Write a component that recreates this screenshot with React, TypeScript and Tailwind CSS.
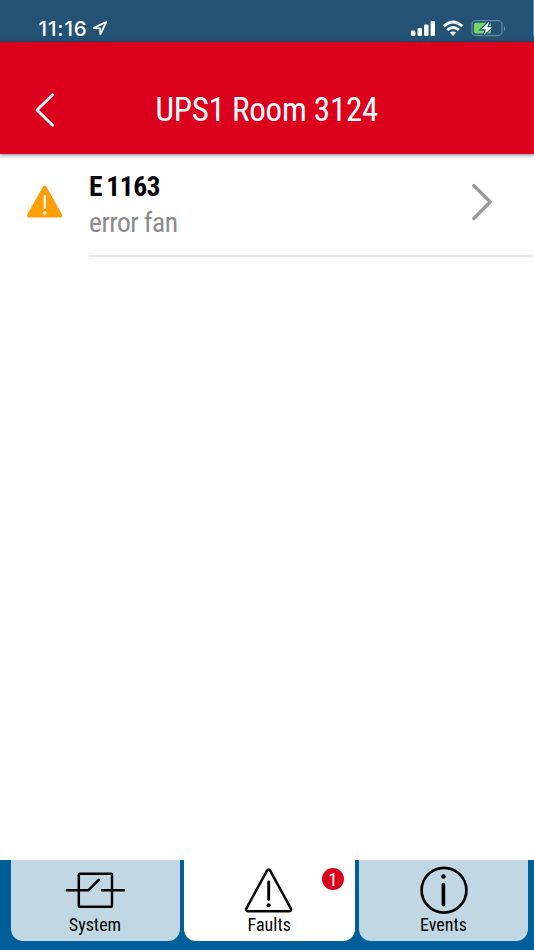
const condensed = "font-['Roboto_Condensed',Roboto,sans-serif] [font-stretch:75%] whitespace-nowrap";

function StatusBar() {
  return (
    <div className="relative flex h-[42px] shrink-0 justify-between bg-[#245275]">
      <div className="ml-[38.5px] flex pt-[16px]">
        <span className="h-6 w-[52px] font-[Inter,sans-serif] text-[20.5px] leading-[26px] font-medium tracking-[0.9px] whitespace-nowrap text-white">11:16</span>
        <svg className="mt-[4px] ml-[1px]" width="17" height="17" viewBox="0 0 17 17" fill="none" stroke="white" strokeWidth="1.8" strokeLinejoin="round">
          <path d="M14.2 2 L1.8 7.9 L8 8.3 L8.4 14.3 Z" />
        </svg>
      </div>
      <svg className="mr-[27px] mt-[18px]" width="96" height="22" viewBox="411 18 96 22">
        <g fill="white">
          <rect x="411" y="30.5" width="4.4" height="5.5" rx="1.2" />
          <rect x="417.6" y="28" width="4.4" height="8" rx="1.2" />
          <rect x="424.1" y="24.5" width="4.4" height="11.5" rx="1.2" />
          <rect x="430.6" y="21" width="4.4" height="15" rx="1.2" />
          <path d="M453 36 L449.8 32.6 Q453 30.2 456.2 32.6 Z" />
        </g>
        <g fill="none" stroke="white" strokeWidth="2.9">
          <path d="M443.7 26.3 Q453 17.6 462.3 26.3" />
          <path d="M447.2 30 Q453 24.8 458.8 30" />
        </g>
        <rect x="472" y="20.7" width="30" height="14.8" rx="4" fill="none" stroke="#6987a0" strokeWidth="1.3" />
        <path d="M504 25.5 q2.2 2.8 0 5.6z" fill="#7d98ad" />
        <rect x="474" y="22.8" width="17" height="10.8" rx="2" fill="#72da68" />
        <path d="M489.3 21.5 L481.3 29.2 h4.8 L483.7 35.2 L492 27.2 h-4.8z" fill="white" stroke="#245275" strokeWidth="2.4" paintOrder="stroke" />
      </svg>
      <div className="absolute top-0 right-0 h-[36px] w-px bg-[#4e9bc5]" />
    </div>
  );
}

function Header() {
  return (
    <header className="relative flex h-[112px] shrink-0 bg-[#db001b] shadow-[0_1px_4px_rgba(0,0,0,0.5)]">
      <svg className="mt-[50px] ml-[34px]" width="22" height="36" viewBox="0 0 22 36" fill="none" stroke="white" strokeWidth="2.8" strokeLinecap="round" strokeLinejoin="round">
        <path d="M18.5 2.8 L3 18 L18.5 33.2" />
      </svg>
      <h1 className={`${condensed} mt-[48px] ml-[99.5px] text-[33px] leading-[40px] tracking-[-0.25px] text-white`}>UPS1 Room 3124</h1>
    </header>
  );
}

function FaultRow() {
  return (
    <div className="flex h-[103px]">
      <svg className="mt-[30px] ml-[26px] shrink-0" width="38" height="36" viewBox="0 0 38 36">
        <path d="M18.7 3.8 L34.3 31.5 H3 Z" fill="#ff9f05" stroke="#ff9f05" strokeWidth="4" strokeLinejoin="round" />
        <path d="M18.8 12 V24" stroke="white" strokeWidth="2.2" strokeLinecap="round" />
        <circle cx="18.8" cy="29" r="1.7" fill="white" />
      </svg>
      <div className="ml-[25px] flex h-[103px] grow justify-between border-b-2 border-[#eaeaea]">
        <div className="flex flex-col pt-[15px]">
          <span className={`${condensed} text-[27.5px] leading-[36px] font-bold tracking-[-0.45px] [word-spacing:-1.7px] text-black`}>E 1163</span>
          <span className={`${condensed} text-[27.5px] leading-[36px] tracking-[-0.5px] text-[#8b8b8b]`}>error fan</span>
        </div>
        <svg className="mt-[29px] mr-[40px]" width="24" height="38" viewBox="0 0 24 38" fill="none" stroke="#999" strokeWidth="3.3" strokeLinecap="round" strokeLinejoin="round">
          <path d="M3.8 2.5 L20.3 19 L3.8 35.5" />
        </svg>
      </div>
    </div>
  );
}

function TabBar() {
  const tab = "relative flex h-[80.5px] flex-col items-center rounded-b-[12px]";
  const label = `${condensed} mt-px text-[18px] leading-[22px] text-black`;
  return (
    <nav className="flex h-[90px] shrink-0 bg-[#005f98] pl-[10.5px]">
      <div className={`${tab} w-[169px] bg-[#c1d8e4]`}>
        <svg className="mt-[8px]" width="62" height="45" viewBox="64 868 62 45" fill="none" stroke="black" strokeWidth="2.5" strokeLinecap="round" strokeLinejoin="round">
          <rect x="78.8" y="873.8" width="33.2" height="33" rx="1" />
          <path d="M66.8 890.3 H88.3 L98.7 879.8 M102 890.3 H123.8" />
        </svg>
        <span className={label}>System</span>
      </div>
      <div className={`${tab} ml-[4.5px] w-[170.5px] bg-white`}>
        <svg className="mt-[8px]" width="50" height="45" viewBox="243.9 868 50 45" fill="none" stroke="black" strokeWidth="2.5" strokeLinecap="round" strokeLinejoin="round">
          <path d="M266.8 870.8 Q268.5 868.2 270.2 870.8 L290.7 908.3 Q291.8 911 289 911.2 H248 Q245.2 911 246.3 908.3 Z" />
          <path d="M268.6 882 V899.5" strokeWidth="2.9" />
          <circle cx="268.6" cy="905.2" r="2" fill="black" stroke="none" />
        </svg>
        <span className={label}>Faults</span>
        <span className={`${condensed} absolute top-[8px] right-[10.5px] flex h-[22px] w-[22px] items-center justify-center rounded-full bg-[#db001b] text-[19px] leading-none text-white`}>1</span>
      </div>
      <div className={`${tab} ml-[4.5px] w-[169px] bg-[#c1d8e4]`}>
        <svg className="mt-[5px] shrink-0 overflow-visible" width="50" height="48" viewBox="418.3 865 50 48" fill="none" stroke="black" strokeWidth="2.7">
          <circle cx="443.3" cy="890.2" r="22.4" />
          <path d="M442.7 884.5 V904.7" strokeWidth="3.6" strokeLinecap="round" />
          <circle cx="442.7" cy="876.5" r="2.3" fill="black" stroke="none" />
        </svg>
        <span className={label}>Events</span>
      </div>
    </nav>
  );
}

export default function App() {
  return (
    <div className="flex h-[950px] w-[534px] flex-col overflow-hidden bg-white">
      <StatusBar />
      <Header />
      <main className="grow">
        <FaultRow />
      </main>
      <TabBar />
    </div>
  );
}
